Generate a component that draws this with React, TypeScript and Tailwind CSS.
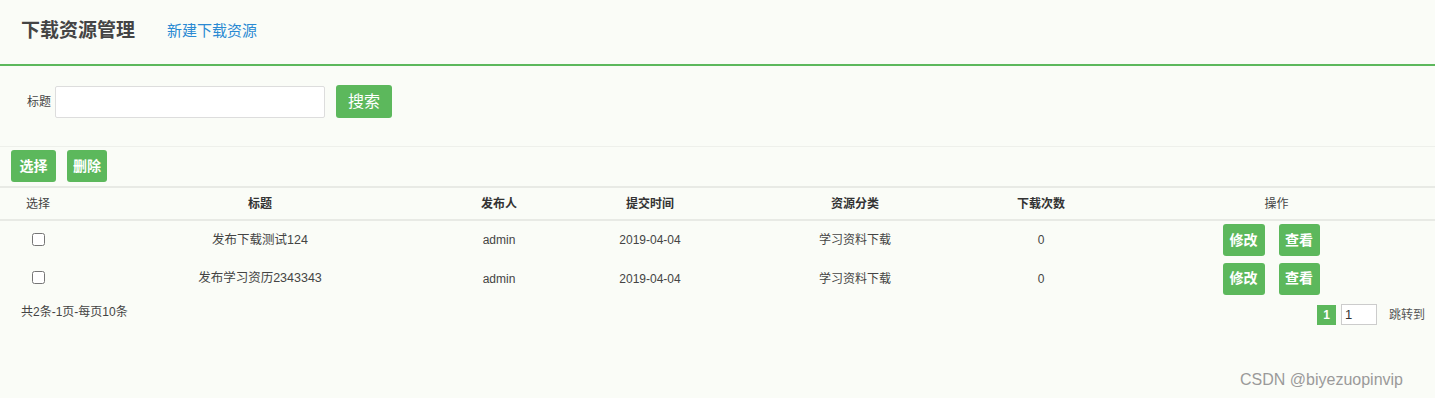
import React from 'react';

const rows = [
    { title: '发布下载测试124', user: 'admin', date: '2019-04-04', cat: '学习资料下载', count: 0 },
    { title: '发布学习资历2343343', user: 'admin', date: '2019-04-04', cat: '学习资料下载', count: 0 },
];

const font = { fontFamily: '"Liberation Sans", "Noto Sans CJK SC", sans-serif' };

export default function App() {
    return (
        <div className="w-[1435px] h-[398px] bg-[#fafcf7] text-[#333] relative overflow-hidden" style={font}>
            {/* Header */}
            <div className="h-[66px] flex items-center pl-[21px] pb-[2px] border-b-2 border-[#5cb85c]">
                <h1 className="text-[19px] font-bold text-[#444]">下载资源管理</h1>
                <a className="ml-[32px] text-[15px] text-[#2a8ad3]">新建下载资源</a>
            </div>

            {/* Search */}
            <div className="flex items-start h-[81px] pt-[20px] pl-[27px] border-b border-[#eef0eb]">
                <span className="text-[12px] text-[#444] mt-[7px]">标题</span>
                <input className="ml-[4px] w-[270px] h-[32px] bg-white border border-[#ddd] rounded-[2px] outline-none" />
                <button className="ml-[11px] w-[56px] h-[33px] bg-[#5cb85c] text-white text-[16px] rounded-[3px] -mt-[1px]">搜索</button>
            </div>

            {/* Toolbar */}
            <div className="flex items-start gap-[11px] pl-[11px] pt-[3px] h-[39px]">
                <button className="w-[45px] h-[32px] bg-[#5cb85c] text-white text-[14px] font-bold rounded-[3px]">选择</button>
                <button className="w-[40px] h-[32px] bg-[#5cb85c] text-white text-[14px] font-bold rounded-[3px]">删除</button>
            </div>

            {/* Table */}
            <table className="w-full border-collapse text-[12px] text-[#444] table-fixed">
                <colgroup>
                    <col className="w-[76px]" />
                    <col className="w-[368px]" />
                    <col className="w-[110px]" />
                    <col className="w-[192px]" />
                    <col className="w-[218px]" />
                    <col className="w-[154px]" />
                    <col />
                </colgroup>
                <thead>
                    <tr className="h-[33px] border-t-2 border-b-2 border-[#e8eae5]">
                        <th className="font-normal">选择</th>
                        <th className="font-bold text-[#333]">标题</th>
                        <th className="font-bold text-[#333]">发布人</th>
                        <th className="font-bold text-[#333]">提交时间</th>
                        <th className="font-bold text-[#333]">资源分类</th>
                        <th className="font-bold text-[#333]">下载次数</th>
                        <th className="font-normal">操作</th>
                    </tr>
                </thead>
                <tbody>
                    {rows.map((r, i) => (
                        <tr key={i} className="h-[39px]">
                            <td className="text-center align-middle">
                                <input type="checkbox" className="w-[13px] h-[13px] -mt-[3px] align-middle" />
                            </td>
                            <td className="text-center text-[12.5px]">{r.title}</td>
                            <td className="text-center">{r.user}</td>
                            <td className="text-center">{r.date}</td>
                            <td className="text-center">{r.cat}</td>
                            <td className="text-center">{r.count}</td>
                            <td className="text-center">
                                <div className="flex justify-center gap-[14px] pr-[11px]">
                                    <button className="w-[42px] h-[32px] bg-[#5cb85c] text-white text-[14px] font-bold rounded-[3px]">修改</button>
                                    <button className="w-[41px] h-[32px] bg-[#5cb85c] text-white text-[14px] font-bold rounded-[3px]">查看</button>
                                </div>
                            </td>
                        </tr>
                    ))}
                </tbody>
            </table>

            {/* Footer */}
            <div className="flex items-start justify-between pl-[21px] pr-[10px] pt-[4px]">
                <span className="text-[12px] text-[#444] mt-[1px]">共2条-1页-每页10条</span>
                <div className="flex items-center mt-[2px]">
                    <span className="w-[19px] h-[20px] bg-[#5cb85c] text-white text-[12px] font-bold flex items-center justify-center">1</span>
                    <input defaultValue="1" className="ml-[5px] w-[36px] h-[21px] bg-white border border-[#ccc] text-[13px] pl-[3px] outline-none" />
                    <span className="ml-[12px] text-[12px] text-[#555]">跳转到</span>
                </div>
            </div>

            <span className="absolute left-[1240px] top-[368px] text-[16px] text-[#9a9a9a]" style={{ fontFamily: '"Liberation Sans", sans-serif' }}>
                CSDN @biyezuopinvip
            </span>
        </div>
    );
}
